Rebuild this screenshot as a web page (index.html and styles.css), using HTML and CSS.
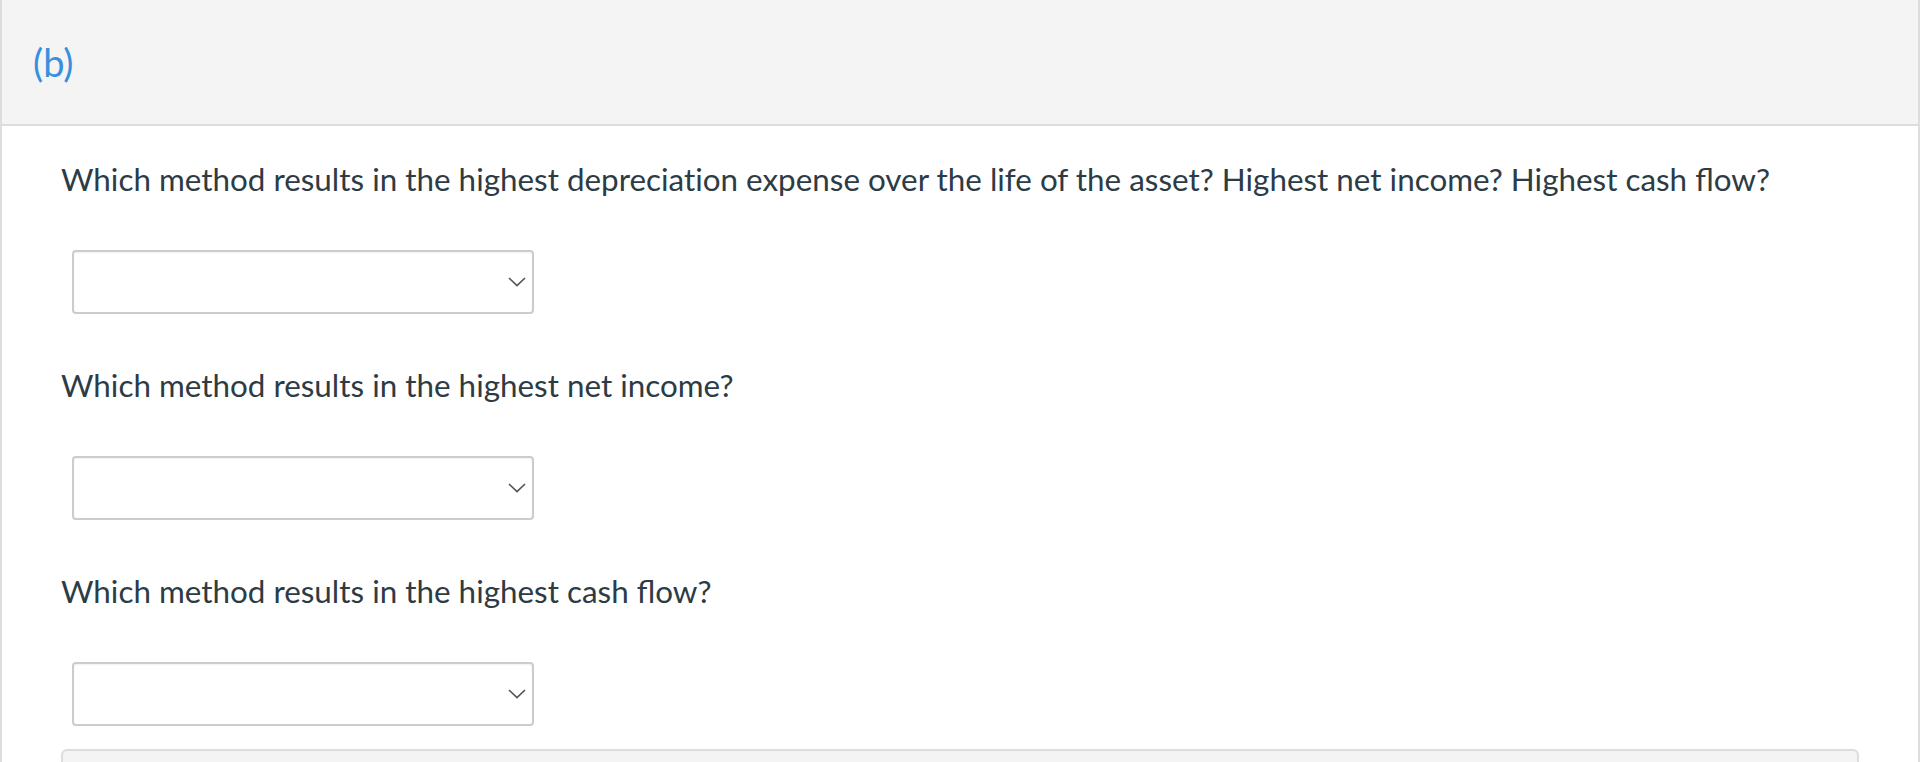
FILE: index.html
```html
<!DOCTYPE html>
<html lang="en">
<head>
<meta charset="utf-8">
<title>(b)</title>
<link rel="stylesheet" href="styles.css">
</head>
<body>
<div class="panel">
  <div class="panel-header">
    <span class="part-label">(b)</span>
  </div>
  <div class="panel-body">
    <p class="question">Which method results in the highest depreciat&zwnj;ion expense over the life of the asset? Highest net income? Highest cash flow?</p>
    <div class="select">
      <svg class="chevron" width="18" height="10" viewBox="0 0 18 10"><polyline points="1,1 9,8.5 17,1" fill="none" stroke="#555" stroke-width="1.7"/></svg>
    </div>
    <p class="question">Which method results in the highest net income?</p>
    <div class="select">
      <svg class="chevron" width="18" height="10" viewBox="0 0 18 10"><polyline points="1,1 9,8.5 17,1" fill="none" stroke="#555" stroke-width="1.7"/></svg>
    </div>
    <p class="question">Which method results in the highest cash flow?</p>
    <div class="select">
      <svg class="chevron" width="18" height="10" viewBox="0 0 18 10"><polyline points="1,1 9,8.5 17,1" fill="none" stroke="#555" stroke-width="1.7"/></svg>
    </div>
    <div class="answer-box"></div>
  </div>
</div>
</body>
</html>
```
FILE: styles.css
```css
html, body {
  margin: 0;
  padding: 0;
  background: #ffffff;
}
body {
  font-family: Lato, "Noto Sans", sans-serif;
  color: #2d3b45;
}
.panel {
  width: 1920px;
  box-sizing: border-box;
  border-left: 2px solid #dddddd;
  border-right: 2px solid #dddddd;
  min-height: 762px;
}
.panel-header {
  height: 124px;
  background: #f4f4f4;
  border-bottom: 2px solid #dddddd;
  display: flex;
  align-items: center;
  padding-left: 31px;
}
.part-label {
  font-size: 38px;
  color: #3a8fdc;
  line-height: 1;
}
.panel-body {
  padding: 32px 59px 0 59px;
}
.question {
  margin: 0;
  font-size: 31.4px;
  line-height: 42px;
}
.select {
  position: relative;
  width: 462px;
  height: 64px;
  box-sizing: border-box;
  margin: 50px 0 50px 11px;
  border: 2px solid #cccccc;
  border-radius: 4px;
  background: #ffffff;
  box-shadow: inset 0 1px 2px rgba(0,0,0,0.06);
}
.chevron {
  position: absolute;
  right: 6px;
  top: 50%;
  margin-top: -5px;
}
.answer-box {
  margin-top: -27px;
  height: 60px;
  background: #f4f4f4;
  border: 2px solid #dddddd;
  border-bottom: none;
  border-radius: 6px 6px 0 0;
}
```
